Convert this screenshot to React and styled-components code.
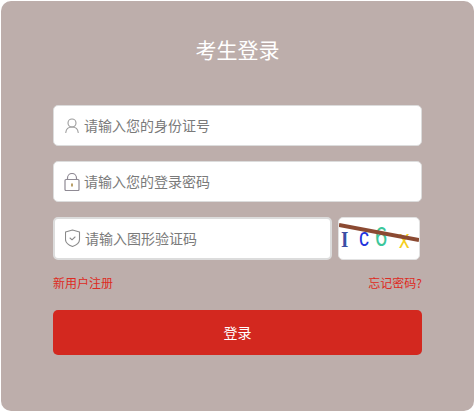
import React from 'react'
import styled, { createGlobalStyle } from 'styled-components'

const GlobalStyle = createGlobalStyle`
  html, body {
    margin: 0;
    padding: 0;
    background: #fff;
    font-family: "Noto Sans CJK SC", "Liberation Sans", sans-serif;
  }
`

const Panel = styled.div`
  box-sizing: border-box;
  width: 473px;
  height: 410px;
  margin: 1px 0 0 1px;
  padding: 0 52px;
  background: #bdaeab;
  border-radius: 10px;
  display: flex;
  flex-direction: column;
`

const Title = styled.h1`
  margin: 33px 0 0;
  height: 30px;
  line-height: 30px;
  font-size: 21px;
  font-weight: 400;
  color: #fff;
  text-align: center;
`

const Field = styled.label`
  box-sizing: border-box;
  display: flex;
  align-items: center;
  gap: 4px;
  width: ${p => p.$width || 369}px;
  height: ${p => p.$height || 41}px;
  padding-left: 10px;
  background: #fff;
  border: ${p => p.$thick ? 2 : 1}px solid #dcdcdc;
  border-radius: 5px;
  font-size: 14px;
  color: #7a7a7a;
`

const Hint = styled.span`
  margin-bottom: 2px;
`

const Fields = styled.div`
  display: flex;
  flex-direction: column;
  gap: 15px;
  margin-top: 41px;
`

const CaptchaRow = styled.div`
  display: flex;
  gap: 6px;
`

const Captcha = styled.div`
  box-sizing: border-box;
  width: 82px;
  height: 43px;
  background: #fff;
  border: 1px solid #e2e2e2;
  border-radius: 5px;
  overflow: hidden;
  svg { display: block; }
`

const Links = styled.div`
  display: flex;
  justify-content: space-between;
  margin-top: 14px;
  height: 18px;
  line-height: 18px;
  font-size: 12px;
  color: #dd2a22;
`

const Submit = styled.button`
  margin-top: 18px;
  padding: 0 0 2px;
  width: 369px;
  height: 45px;
  border: 0;
  border-radius: 5px;
  background: #d3281f;
  color: #fff;
  font: inherit;
  font-size: 14px;
`

const UserIcon = () => (
  <svg width="16" height="18" viewBox="0 0 16 18" fill="none" stroke="#9c9c9c" strokeWidth="1.100">
    <circle cx="8" cy="6" r="4" />
    <path d="M1.800 15.500c.3-3.600 2.700-5.500 6.200-5.500s5.900 1.900 6.200 5.500" strokeLinecap="round" />
  </svg>
)

const LockIcon = () => (
  <svg width="16" height="18" viewBox="0 0 16 18" fill="none" stroke="#8f8a94" strokeWidth="1.200">
    <rect x="1" y="6.500" width="14" height="11" rx="1" />
    <path d="M3.500 6.500V5a4.500 4.500 0 0 1 9 0v1.500" />
    <path d="M8 10.500v3" stroke="#b9a06a" strokeWidth="2" />
  </svg>
)

const ShieldIcon = () => (
  <svg width="16" height="19" viewBox="0 0 16 19" fill="none" stroke="#8a8a8a" strokeWidth="1.100">
    <path d="M7.500 1 14.500 3v7.500c0 3.300-3.300 5.700-7 7-3.700-1.300-7-3.700-7-7V3z" strokeLinejoin="round" />
    <path d="m5 9 2 1.800L10 8" strokeLinecap="round" />
  </svg>
)

const CaptchaImage = () => (
  <svg width="80" height="41" viewBox="0 0 80 41">
    <text x="2" y="23" transform="scale(1 1.250)" fontFamily="Liberation Serif, serif" fontWeight="700" fontSize="19" fill="#3a4fa5">I</text>
    <g fontFamily="Liberation Sans, sans-serif">
      <text x="20" y="27" transform="translate(0 -6) scale(1 1.250)" fontSize="20" fill="#2233dd">c</text>
      <text x="36" y="25" transform="translate(0 -3) scale(1 1.250)" fontSize="22" fill="#3cc79a">6</text>
      <text x="60" y="25" transform="translate(0 -1) scale(1 1.250)" fontSize="21" fill="#f5cf20">x</text>
    </g>
    <path d="M0 7 L80 22" stroke="#8b4a32" strokeWidth="4" fill="none" />
  </svg>
)

export default function App() {
  return (
    <>
      <GlobalStyle />
      <Panel>
        <Title>考生登录</Title>
        <Fields>
          <Field><UserIcon /><Hint>请输入您的身份证号</Hint></Field>
          <Field><LockIcon /><Hint>请输入您的登录密码</Hint></Field>
          <CaptchaRow>
            <Field $width={279} $height={43} $thick><ShieldIcon /><Hint>请输入图形验证码</Hint></Field>
            <Captcha><CaptchaImage /></Captcha>
          </CaptchaRow>
        </Fields>
        <Links>
          <span>新用户注册</span>
          <span>忘记密码?</span>
        </Links>
        <Submit>登录</Submit>
      </Panel>
    </>
  )
}
